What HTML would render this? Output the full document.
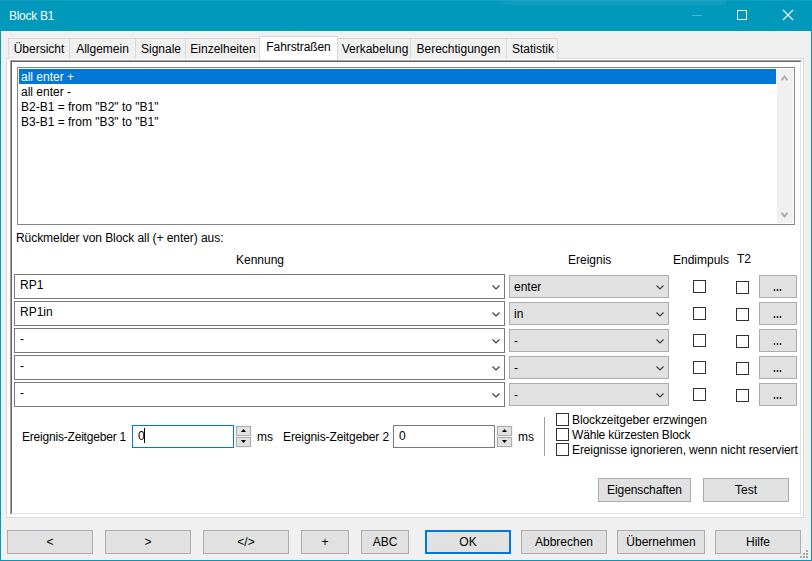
<!DOCTYPE html>
<html><head><meta charset="utf-8">
<style>
*{box-sizing:border-box;margin:0;padding:0}
html,body{width:812px;height:561px;overflow:hidden;background:#F0F0F0}
body{position:relative;font-family:"Liberation Sans",sans-serif;font-size:12px;color:#000}
.a{position:absolute}
.t{position:absolute;white-space:nowrap;line-height:15px}
.win{left:0;top:0;width:812px;height:561px;border:1px solid #0099BC;border-top:none;background:#F0F0F0}
.title{left:0;top:0;width:812px;height:31px;background:#0099BC}
.tab{position:absolute;top:38px;height:21px;border:1px solid #D9D9D9;border-bottom:none;background:#F0F0F0}
.tab span{position:absolute;left:0;right:0;text-align:center;top:3px;line-height:15px;white-space:nowrap}
.panel{left:6px;top:58px;width:798px;height:460px;border:1px solid #D9D9D9;background:#fff}
.frame{left:10px;top:60px;width:792px;height:455px;border-top:1px solid #A0A0A0;border-left:1px solid #A0A0A0;border-right:1px solid #fff;border-bottom:1px solid #fff}
.frame2{left:11px;top:61px;width:790px;height:453px;border-top:1px solid #696969;border-left:1px solid #696969;border-right:1px solid #E3E3E3;border-bottom:1px solid #E3E3E3}
.lb{left:17px;top:67px;width:778px;height:158px;border:1px solid #828790;background:#fff}
.sel{left:19px;top:69px;width:757px;height:15px;background:#0078D7}
.sb{left:777px;top:69px;width:16px;height:154px;background:#F0F0F0}
.cbe{position:absolute;left:14px;width:491px;height:25px;border:1px solid #7A7A7A;background:#fff}
.cbl{position:absolute;left:509px;width:160px;height:23px;border:1px solid #ADADAD;background:#E1E1E1}
.chk{position:absolute;width:13px;height:13px;border:1px solid #333;background:#fff}
.btn{position:absolute;height:24px;border:1px solid #ADADAD;background:#E1E1E1;text-align:center;line-height:22px;white-space:nowrap}
.dots{position:absolute;left:759px;width:38px;height:23px;border:1px solid #ADADAD;background:#E1E1E1}
.edit{position:absolute;top:425px;width:102px;height:23px;border:1px solid #7A7A7A;background:#fff}
.spin{position:absolute;width:15px;height:10px;border:1px solid #ADADAD;background:#E1E1E1}
</style></head><body>
<div class="a win"></div>
<div class="a title"></div>
<div class="a" style="left:0;top:0;width:812px;height:1px;background:rgba(255,255,255,0.07)"></div>
<div class="a" style="left:496px;top:0;width:230px;height:5px;background:linear-gradient(90deg,rgba(255,255,255,0.02),rgba(255,255,255,0.055) 10%,rgba(255,255,255,0.055))"></div>
<div class="t" style="left:9px;top:9px;color:#fff;letter-spacing:-0.3px">Block B1</div>
<svg class="a" style="left:680px;top:0" width="132" height="31">
<line x1="12" y1="15.5" x2="22" y2="15.5" stroke="#4DB8D1" stroke-width="1"/>
<rect x="57.5" y="10.5" width="9" height="9" fill="none" stroke="#fff" stroke-width="1"/>
<path d="M103 10 L113 20 M113 10 L103 20" stroke="#fff" stroke-width="1.1"/>
</svg>
<div class="a panel"></div>
<div class="tab" style="left:8px;width:62px"><span>Übersicht</span></div>
<div class="tab" style="left:69px;width:67px"><span>Allgemein</span></div>
<div class="tab" style="left:135px;width:51px"><span style="left:1px">Signale</span></div>
<div class="tab" style="left:185px;width:75px"><span style="left:1px">Einzelheiten</span></div>
<div class="tab" style="left:337px;width:74px"><span style="left:2px">Verkabelung</span></div>
<div class="tab" style="left:410px;width:97px"><span>Berechtigungen</span></div>
<div class="tab" style="left:506px;width:52px"><span style="left:2px">Statistik</span></div>
<div class="tab" style="left:259px;width:79px;top:36px;height:24px;background:#fff"><span style="letter-spacing:-0.1px">Fahrstraßen</span></div>
<div class="a frame"></div>
<div class="a frame2"></div>
<div class="a lb"></div>
<div class="a sel"></div>
<div class="t" style="left:21px;top:70px;color:#fff">all enter +</div>
<div class="t" style="left:21px;top:85px">all enter -</div>
<div class="t" style="left:21px;top:100px">B2-B1 = from "B2" to "B1"</div>
<div class="t" style="left:21px;top:115px">B3-B1 = from "B3" to "B1"</div>
<div class="a sb"></div>
<svg class="a" style="left:777px;top:68px" width="17" height="156">
<polygon points="4,11.5 7.5,7 11,11.5 9.8,12.9 7.5,9.8 5.2,12.9" fill="#A6A6A6"/>
<polygon points="5.2,144 7.5,147.1 9.8,144 11,145.4 7.5,149.9 4,145.4" fill="#A6A6A6"/>
</svg>
<div class="t" style="left:16px;top:231px;letter-spacing:-0.06px">Rückmelder von Block all (+ enter) aus:</div>
<div class="t" style="left:236px;top:253px">Kennung</div>
<div class="t" style="left:568px;top:253px">Ereignis</div>
<div class="t" style="left:673px;top:253px">Endimpuls</div>
<div class="t" style="left:737px;top:252px">T2</div>

<div class="cbe" style="top:274px"></div>
<div class="t" style="left:20px;top:278px">RP1</div>
<svg class="a" style="left:490px;top:282px" width="12" height="8"><path d="M2.5 3.5 L6 7 L9.5 3.5" fill="none" stroke="#404040" stroke-width="1.2"/></svg>
<div class="cbl" style="top:275px"></div>
<div class="t" style="left:514px;top:280px">enter</div>
<svg class="a" style="left:654px;top:282px" width="12" height="8"><path d="M2.5 3.5 L6 7 L9.5 3.5" fill="none" stroke="#404040" stroke-width="1.2"/></svg>
<div class="chk" style="left:693px;top:280px"></div>
<div class="chk" style="left:736px;top:281px"></div>
<div class="dots" style="top:275px"></div><svg class="a" style="left:770px;top:289px" width="14" height="2"><rect x="3.8" y="0" width="1.4" height="2" fill="#111"/><rect x="6.8" y="0" width="1.4" height="2" fill="#111"/><rect x="9.8" y="0" width="1.4" height="2" fill="#111"/></svg>
<div class="cbe" style="top:301px"></div>
<div class="t" style="left:20px;top:305px">RP1in</div>
<svg class="a" style="left:490px;top:309px" width="12" height="8"><path d="M2.5 3.5 L6 7 L9.5 3.5" fill="none" stroke="#404040" stroke-width="1.2"/></svg>
<div class="cbl" style="top:302px"></div>
<div class="t" style="left:514px;top:307px">in</div>
<svg class="a" style="left:654px;top:309px" width="12" height="8"><path d="M2.5 3.5 L6 7 L9.5 3.5" fill="none" stroke="#404040" stroke-width="1.2"/></svg>
<div class="chk" style="left:693px;top:307px"></div>
<div class="chk" style="left:736px;top:308px"></div>
<div class="dots" style="top:302px"></div><svg class="a" style="left:770px;top:316px" width="14" height="2"><rect x="3.8" y="0" width="1.4" height="2" fill="#111"/><rect x="6.8" y="0" width="1.4" height="2" fill="#111"/><rect x="9.8" y="0" width="1.4" height="2" fill="#111"/></svg>
<div class="cbe" style="top:328px"></div>
<div class="t" style="left:20px;top:332px">-</div>
<svg class="a" style="left:490px;top:336px" width="12" height="8"><path d="M2.5 3.5 L6 7 L9.5 3.5" fill="none" stroke="#404040" stroke-width="1.2"/></svg>
<div class="cbl" style="top:329px"></div>
<div class="t" style="left:514px;top:334px">-</div>
<svg class="a" style="left:654px;top:336px" width="12" height="8"><path d="M2.5 3.5 L6 7 L9.5 3.5" fill="none" stroke="#404040" stroke-width="1.2"/></svg>
<div class="chk" style="left:693px;top:334px"></div>
<div class="chk" style="left:736px;top:335px"></div>
<div class="dots" style="top:329px"></div><svg class="a" style="left:770px;top:343px" width="14" height="2"><rect x="3.8" y="0" width="1.4" height="2" fill="#111"/><rect x="6.8" y="0" width="1.4" height="2" fill="#111"/><rect x="9.8" y="0" width="1.4" height="2" fill="#111"/></svg>
<div class="cbe" style="top:355px"></div>
<div class="t" style="left:20px;top:359px">-</div>
<svg class="a" style="left:490px;top:363px" width="12" height="8"><path d="M2.5 3.5 L6 7 L9.5 3.5" fill="none" stroke="#404040" stroke-width="1.2"/></svg>
<div class="cbl" style="top:356px"></div>
<div class="t" style="left:514px;top:361px">-</div>
<svg class="a" style="left:654px;top:363px" width="12" height="8"><path d="M2.5 3.5 L6 7 L9.5 3.5" fill="none" stroke="#404040" stroke-width="1.2"/></svg>
<div class="chk" style="left:693px;top:361px"></div>
<div class="chk" style="left:736px;top:362px"></div>
<div class="dots" style="top:356px"></div><svg class="a" style="left:770px;top:370px" width="14" height="2"><rect x="3.8" y="0" width="1.4" height="2" fill="#111"/><rect x="6.8" y="0" width="1.4" height="2" fill="#111"/><rect x="9.8" y="0" width="1.4" height="2" fill="#111"/></svg>
<div class="cbe" style="top:382px"></div>
<div class="t" style="left:20px;top:386px">-</div>
<svg class="a" style="left:490px;top:390px" width="12" height="8"><path d="M2.5 3.5 L6 7 L9.5 3.5" fill="none" stroke="#404040" stroke-width="1.2"/></svg>
<div class="cbl" style="top:383px"></div>
<div class="t" style="left:514px;top:388px">-</div>
<svg class="a" style="left:654px;top:390px" width="12" height="8"><path d="M2.5 3.5 L6 7 L9.5 3.5" fill="none" stroke="#404040" stroke-width="1.2"/></svg>
<div class="chk" style="left:693px;top:388px"></div>
<div class="chk" style="left:736px;top:389px"></div>
<div class="dots" style="top:383px"></div><svg class="a" style="left:770px;top:397px" width="14" height="2"><rect x="3.8" y="0" width="1.4" height="2" fill="#111"/><rect x="6.8" y="0" width="1.4" height="2" fill="#111"/><rect x="9.8" y="0" width="1.4" height="2" fill="#111"/></svg>

<div class="t" style="left:22px;top:430px;letter-spacing:-0.2px">Ereignis-Zeitgeber 1</div>
<div class="edit" style="left:132px;border-color:#0078D7"></div>
<div class="t" style="left:138px;top:429px">0</div>
<div class="a" style="left:144px;top:428px;width:1px;height:15px;background:#000"></div>
<div class="a" style="left:235px;top:425px;width:17px;height:23px;background:#F3F3F3"></div>
<div class="spin" style="left:236px;top:426px"></div>
<div class="spin" style="left:236px;top:437px"></div>
<svg class="a" style="left:236px;top:425px" width="15" height="22"><polygon points="5,7 7.5,4 10,7" fill="#000"/><polygon points="5,15 10,15 7.5,18" fill="#000"/></svg>
<div class="t" style="left:257px;top:430px">ms</div>
<div class="t" style="left:283px;top:430px;letter-spacing:-0.1px">Ereignis-Zeitgeber 2</div>
<div class="edit" style="left:393px"></div>
<div class="t" style="left:399px;top:429px">0</div>
<div class="a" style="left:496px;top:425px;width:17px;height:23px;background:#F3F3F3"></div>
<div class="spin" style="left:497px;top:426px"></div>
<div class="spin" style="left:497px;top:437px"></div>
<svg class="a" style="left:497px;top:425px" width="15" height="22"><polygon points="5,7 7.5,4 10,7" fill="#000"/><polygon points="5,15 10,15 7.5,18" fill="#000"/></svg>
<div class="t" style="left:518px;top:430px">ms</div>
<div class="a" style="left:544px;top:417px;width:1px;height:39px;background:#A0A0A0"></div>
<div class="chk" style="left:556px;top:413px"></div>
<div class="chk" style="left:556px;top:428px"></div>
<div class="chk" style="left:556px;top:443px"></div>
<div class="t" style="left:572px;top:413px;letter-spacing:-0.08px">Blockzeitgeber erzwingen</div>
<div class="t" style="left:572px;top:428px;letter-spacing:-0.18px">Wähle kürzesten Block</div>
<div class="t" style="left:572px;top:443px;letter-spacing:-0.1px">Ereignisse ignorieren, wenn nicht reserviert</div>
<div class="btn" style="left:598px;top:478px;width:93px;letter-spacing:-0.1px">Eigenschaften</div>
<div class="btn" style="left:703px;top:478px;width:86px">Test</div>
<div class="btn" style="left:7px;top:530px;width:86px">&lt;</div>
<div class="btn" style="left:105px;top:530px;width:86px">&gt;</div>
<div class="btn" style="left:203px;top:530px;width:86px">&lt;/&gt;</div>
<div class="btn" style="left:301px;top:530px;width:48px">+</div>
<div class="btn" style="left:361px;top:530px;width:48px">ABC</div>
<div class="btn" style="left:425px;top:530px;width:86px;border:2px solid #0078D7;line-height:20px">OK</div>
<div class="btn" style="left:521px;top:530px;width:86px">Abbrechen</div>
<div class="btn" style="left:617px;top:530px;width:88px">Übernehmen</div>
<div class="btn" style="left:715px;top:530px;width:86px">Hilfe</div>
<svg class="a" style="left:798px;top:548px" width="12" height="12"><rect x="8" y="2" width="2" height="2" fill="#A6A6A6"/><rect x="5" y="5" width="2" height="2" fill="#A6A6A6"/><rect x="8" y="5" width="2" height="2" fill="#A6A6A6"/><rect x="2" y="8" width="2" height="2" fill="#A6A6A6"/><rect x="5" y="8" width="2" height="2" fill="#A6A6A6"/><rect x="8" y="8" width="2" height="2" fill="#A6A6A6"/></svg>
</body></html>
